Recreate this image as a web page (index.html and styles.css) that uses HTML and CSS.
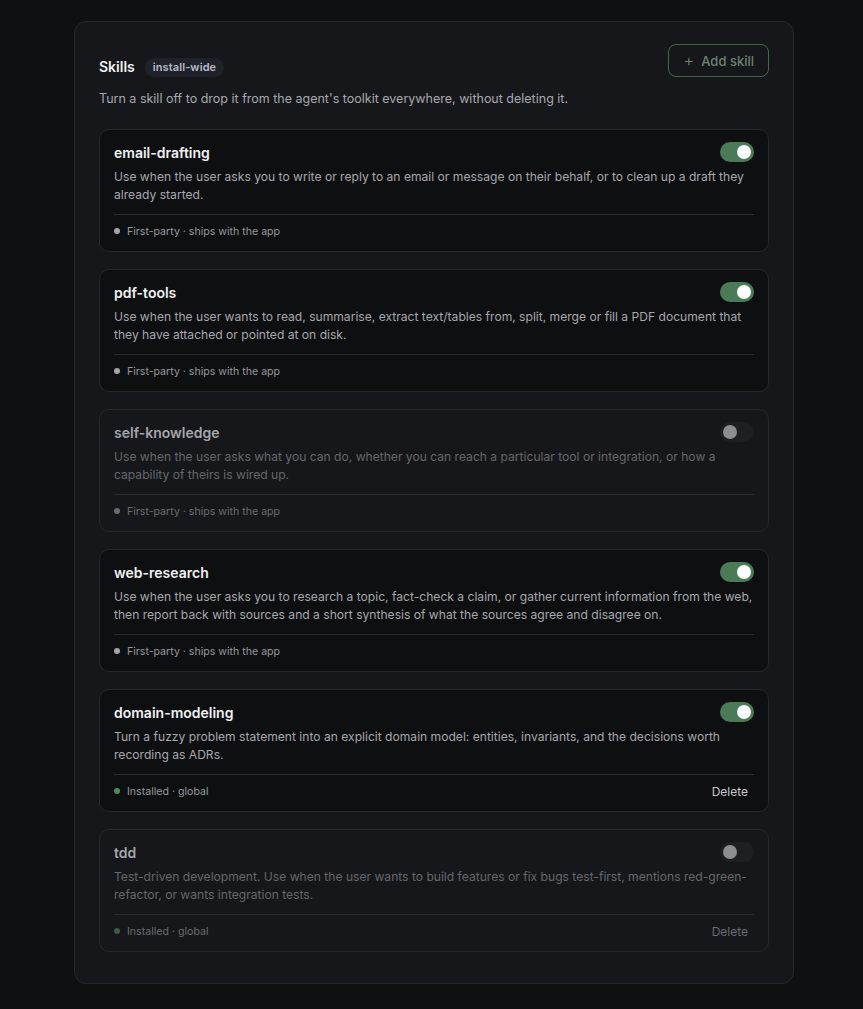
FILE: index.html
```html
<!DOCTYPE html>
<html lang="en">
<head>
  <meta charset="UTF-8" />
  <title>Skills</title>
  <link rel="stylesheet" href="styles.css">
</head>
<body>
  <div class="panel">
    <div class="panel-head">
      <div class="head-left">
        <div class="head-title">
          <h2>Skills</h2>
          <span class="badge">install-wide</span>
        </div>
        <p class="hint">Turn a skill off to drop it from the agent's toolkit everywhere, without deleting it.</p>
      </div>
      <button class="add-btn"><span class="plus">+</span> Add skill</button>
    </div>

    <div class="skill-list">
      <div class="skill">
        <div class="skill-top">
          <span class="skill-name">email-drafting</span>
          <span class="toggle on"><span class="knob"></span></span>
        </div>
        <p class="skill-desc">Use when the user asks you to write or reply to an email or message on their behalf, or to clean up a draft they already started.</p>
        <div class="skill-foot">
          <span class="origin"><span class="dot"></span>First-party · ships with the app</span>
        </div>
      </div>

      <div class="skill">
        <div class="skill-top">
          <span class="skill-name">pdf-tools</span>
          <span class="toggle on"><span class="knob"></span></span>
        </div>
        <p class="skill-desc">Use when the user wants to read, summarise, extract text/tables from, split, merge or fill a PDF document that they have attached or pointed at on disk.</p>
        <div class="skill-foot">
          <span class="origin"><span class="dot"></span>First-party · ships with the app</span>
        </div>
      </div>

      <div class="skill off">
        <div class="skill-top">
          <span class="skill-name">self-knowledge</span>
          <span class="toggle"><span class="knob"></span></span>
        </div>
        <p class="skill-desc">Use when the user asks what you can do, whether you can reach a particular tool or integration, or how a capability of theirs is wired up.</p>
        <div class="skill-foot">
          <span class="origin"><span class="dot"></span>First-party · ships with the app</span>
        </div>
      </div>

      <div class="skill">
        <div class="skill-top">
          <span class="skill-name">web-research</span>
          <span class="toggle on"><span class="knob"></span></span>
        </div>
        <p class="skill-desc">Use when the user asks you to research a topic, fact-check a claim, or gather current information from the web, then report back with sources and a short synthesis of what the sources agree and disagree on.</p>
        <div class="skill-foot">
          <span class="origin"><span class="dot"></span>First-party · ships with the app</span>
        </div>
      </div>

      <div class="skill">
        <div class="skill-top">
          <span class="skill-name">domain-modeling</span>
          <span class="toggle on"><span class="knob"></span></span>
        </div>
        <p class="skill-desc">Turn a fuzzy problem statement into an explicit domain model: entities, invariants, and the decisions worth recording as ADRs.</p>
        <div class="skill-foot">
          <span class="origin"><span class="dot green"></span>Installed · global</span>
          <a class="delete" href="#">Delete</a>
        </div>
      </div>

      <div class="skill off">
        <div class="skill-top">
          <span class="skill-name">tdd</span>
          <span class="toggle"><span class="knob"></span></span>
        </div>
        <p class="skill-desc">Test-driven development. Use when the user wants to build features or fix bugs test-first, mentions red-green-refactor, or wants integration tests.</p>
        <div class="skill-foot">
          <span class="origin"><span class="dot green"></span>Installed · global</span>
          <a class="delete" href="#">Delete</a>
        </div>
      </div>
    </div>
  </div>
</body>
</html>
```

FILE: styles.css
```css
:root {
  --page-bg: #0f1012;
  --panel-bg: #16171a;
  --card-bg: #0e0f11;
  --border: #26282c;
  --divider: #2a2c30;
  --text: #f1f2f4;
  --muted: #a6a8ad;
  --faint: #96989d;
  --green: #4b7a56;
}

* {
  box-sizing: border-box;
  margin: 0;
  padding: 0;
}

body {
  font-family: Inter, "Noto Sans", sans-serif;
  background: var(--page-bg);
  color: var(--text);
  padding: 21px 0 26px;
}

.panel {
  width: 720px;
  margin-left: 74px;
  background: var(--panel-bg);
  border: 1px solid var(--border);
  border-radius: 12px;
  padding: 22px 24px 31px;
}

.panel-head {
  display: flex;
  justify-content: space-between;
  align-items: flex-start;
  margin-bottom: 21px;
}

.head-title {
  display: flex;
  align-items: center;
  gap: 10px;
  margin-top: 13px;
}

h2 {
  font-size: 14px;
  font-weight: 600;
  line-height: 20px;
  color: var(--text);
}

.badge {
  font-size: 11px;
  font-weight: 600;
  line-height: 19px;
  padding: 0 8px;
  border-radius: 10px;
  background: #1f222a;
  color: #b7bbc6;
  letter-spacing: 0.1px;
}

.hint {
  font-size: 12.5px;
  line-height: 18px;
  color: var(--muted);
  margin-top: 13px;
}

.add-btn {
  font-family: inherit;
  font-size: 13px;
  font-weight: 500;
  color: #6c8271;
  background: transparent;
  border: 1px solid #4a6250;
  border-radius: 8px;
  height: 33px;
  padding: 0 14px;
  display: flex;
  align-items: center;
  gap: 7px;
  cursor: pointer;
}

.plus {
  font-size: 17px;
  font-weight: 300;
  line-height: 1;
}

.skill-list {
  display: flex;
  flex-direction: column;
  gap: 17px;
}

.skill {
  background: var(--card-bg);
  border: 1px solid var(--border);
  border-radius: 10px;
  padding: 11px 14px 12px;
}

.skill-top {
  display: flex;
  justify-content: space-between;
  align-items: center;
  height: 22px;
}

.skill-name {
  font-size: 14px;
  font-weight: 600;
  color: var(--text);
}

.skill-desc {
  font-size: 12.1px;
  line-height: 18px;
  color: var(--muted);
  margin-top: 5px;
  padding-bottom: 10px;
  border-bottom: 1px solid var(--divider);
}

.skill-foot {
  display: flex;
  justify-content: space-between;
  align-items: center;
  height: 16px;
  margin-top: 8px;
}

.origin {
  display: flex;
  align-items: center;
  gap: 7px;
  font-size: 10.6px;
  color: var(--faint);
}

.dot {
  width: 6px;
  height: 6px;
  border-radius: 50%;
  background: #a3a5aa;
}

.dot.green {
  background: #4f8a5d;
}

.delete {
  font-size: 12px;
  color: #c6c8cc;
  text-decoration: none;
  margin-right: 6px;
}

/* Toggle switch */
.toggle {
  width: 34px;
  height: 20px;
  border-radius: 10px;
  background: #24262a;
  display: flex;
  align-items: center;
  padding: 0 3px;
}

.toggle .knob {
  width: 14px;
  height: 14px;
  border-radius: 50%;
  background: #8c8e94;
}

.toggle.on {
  background: var(--green);
  justify-content: flex-end;
}

.toggle.on .knob {
  background: #fbfcfb;
}

/* Disabled skills */
.skill.off {
  background: var(--panel-bg);
}

.skill.off .skill-name {
  color: #a4a6ab;
}

.skill.off .skill-desc {
  color: #64676c;
}

.skill.off .origin {
  color: #6a6c71;
}

.skill.off .dot {
  background: #6a6c71;
}

.skill.off .dot.green {
  background: #3d5c45;
}

.skill.off .delete {
  color: #6a6c71;
}

.skill.off .toggle {
  background: #1d1f23;
}
```
